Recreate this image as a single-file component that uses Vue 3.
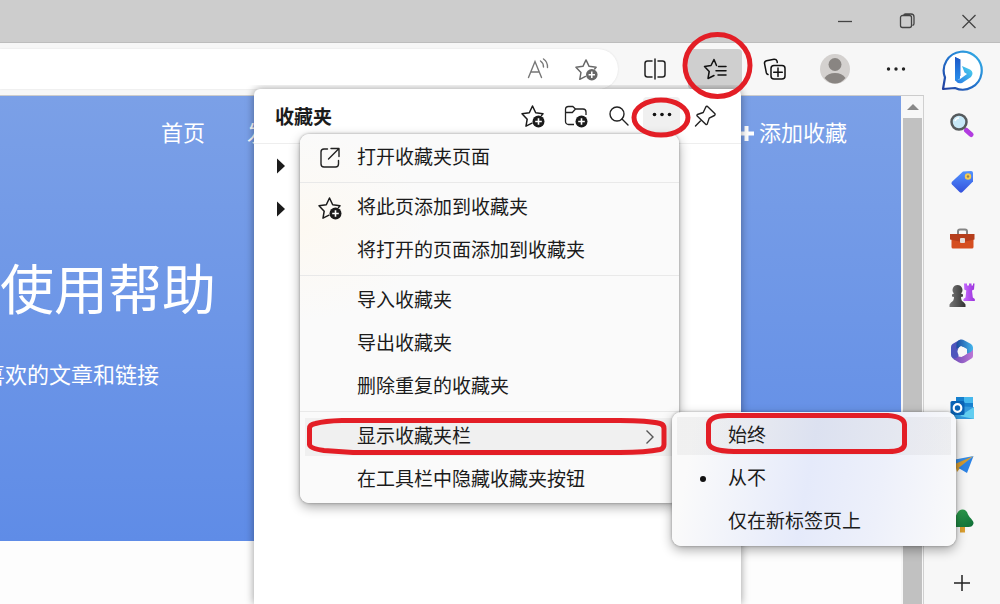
<script setup>
import { ref } from 'vue'

const address = ref('')
const windowButtons = [
  { name: '最小化', d: 'M3 10.5h14' },
  { name: '还原', d: 'M3.500 6.500a2 2 0 0 1 2-2h7a2 2 0 0 1 2 2v8a2 2 0 0 1-2 2h-7a2 2 0 0 1-2-2zM6.500 4.500q.5-1.500 2-1.500h5.500a3 3 0 0 1 3 3v6.500q0 1.500-1.500 2' },
  { name: '关闭', d: 'M3.500 4l13 13M16.500 4l-13 13' },
]
const groups = [
  [{ text: '打开收藏夹页面', icon: 'open' }],
  [{ text: '将此页添加到收藏夹', icon: 'star' }, { text: '将打开的页面添加到收藏夹' }],
  [{ text: '导入收藏夹' }, { text: '导出收藏夹' }, { text: '删除重复的收藏夹' }],
  [{ text: '显示收藏夹栏', sub: true }, { text: '在工具栏中隐藏收藏夹按钮' }],
]
const options = ['始终', '从不', '仅在新标签页上']
const current = ref('从不')
const tools = ['搜索', '购物', '工具', '游戏', 'Microsoft 365', 'Outlook', 'Drop', '电子树']
</script>

<template>
  <div class="browser">
    <svg class="defs" aria-hidden="true">
      <defs>
        <symbol id="star-add" viewBox="0 0 26 26">
          <path d="M12 20.200l-6 3 1.200-7L2 10.700l7.300-1L12.500 3l3.200 6.700 7.300 1-1.500 1.700" fill="none" stroke="currentColor" stroke-width="1.500" stroke-linejoin="round" stroke-linecap="round" />
          <circle cx="18.500" cy="18.500" r="6" fill="currentColor" />
          <path d="M18.500 15.200v6.600M15.200 18.500h6.600" stroke="#fff" stroke-width="1.600" />
        </symbol>
        <linearGradient id="bing-line" x1="0" y1="1" x2="1" y2="0"><stop stop-color="#233f9e" /><stop offset=".5" stop-color="#2376cf" /><stop offset="1" stop-color="#35b4e8" /></linearGradient>
        <linearGradient id="bing-b" x1="0" y1="0" x2="0" y2="1"><stop stop-color="#1d58c7" /><stop offset="1" stop-color="#2990ed" /></linearGradient>
        <linearGradient id="bing-c" x1="0" y1="1" x2="1" y2="0"><stop stop-color="#2577e5" /><stop offset="1" stop-color="#4ed6ed" /></linearGradient>
        <linearGradient id="tag-fill" x1="0" y1="0" x2="0" y2="1"><stop stop-color="#5293ff" /><stop offset="1" stop-color="#3451dc" /></linearGradient>
        <linearGradient id="pawn-fill"><stop stop-color="#777" /><stop offset="1" stop-color="#333" /></linearGradient>
        <linearGradient id="rook-fill"><stop stop-color="#c66aff" /><stop offset="1" stop-color="#9a32db" /></linearGradient>
        <linearGradient id="office-a"><stop stop-color="#1c4b9f" /><stop offset="1" stop-color="#45b6ed" /></linearGradient>
        <linearGradient id="office-b"><stop stop-color="#6c4bb6" /><stop offset="1" stop-color="#bc76d6" /></linearGradient>
        <linearGradient id="tree-fill" x1="0" y1="0" x2="1" y2="1"><stop stop-color="#35a852" /><stop offset="1" stop-color="#0d6b35" /></linearGradient>
      </defs>
    </svg>

    <header class="titlebar">
      <button v-for="b in windowButtons" :key="b.name" :aria-label="b.name">
        <svg width="20" height="20" viewBox="0 0 20 20"><path :d="b.d" fill="none" stroke="#444" stroke-width="1.300" /></svg>
      </button>
    </header>

    <div class="body">
      <div class="main">
        <div class="toolbar">
          <div class="address">
            <input v-model="address" type="text" aria-label="地址栏" />
            <button aria-label="大声朗读">
              <svg width="24" height="24" viewBox="0 0 24 24" fill="none" stroke="#777" stroke-width="1.400" stroke-linecap="round"><path d="M2.500 20.500L9 4.500l6.500 16M5 15h8M14.500 4q3 2 3 6M17.500 2q4.300 3 4 8.500" /></svg>
            </button>
            <button aria-label="将此页添加到收藏夹" class="muted"><svg width="25" height="25"><use href="#star-add" /></svg></button>
          </div>
          <button class="tool" aria-label="拆分屏幕">
            <svg width="24" height="24" viewBox="0 0 24 24" fill="none" stroke="#222" stroke-width="1.500" stroke-linecap="round"><path d="M9 4H4.500a2.500 2.500 0 0 0-2.500 2.500v11A2.500 2.500 0 0 0 4.500 20H9M15 4h4.500a2.500 2.500 0 0 1 2.500 2.500v11a2.500 2.500 0 0 1-2.500 2.500H15M12 2v20" /></svg>
          </button>
          <button class="tool active" aria-label="收藏夹">
            <svg width="24" height="24" viewBox="0 0 24 24" fill="none" stroke="#111" stroke-width="1.500" stroke-linejoin="round" stroke-linecap="round"><path d="M13.500 8.500L11 2.500 8 8.500l-6.500 1 4.700 5-1.200 7 6-3M15.500 9.500H23M13 13.700h10M15 18h8" /></svg>
          </button>
          <button class="tool" aria-label="集锦">
            <svg width="24" height="24" viewBox="0 0 24 24" fill="none" stroke="#111" stroke-width="1.500" stroke-linecap="round"><path d="M5 17.500q-1.300-.3-1.700-1.800L1.500 6.500Q1.300 4.300 3.500 3.700L11 2.200q2.300-.2 3 1.800l.3 1.500" /><rect x="8" y="8.500" width="14" height="13.500" rx="3" /><path d="M15 11v8.500M10.700 15.300h8.600" /></svg>
          </button>
          <button class="tool" aria-label="个人资料">
            <svg width="30" height="30" viewBox="0 0 30 30"><circle cx="15" cy="15" r="15" fill="#d4d1cf" /><circle cx="15" cy="10.500" r="6.500" fill="#898582" /><path d="M4.500 24Q8 19 15 19t10.500 5Q21 29.500 15 29.500T4.500 24" fill="#898582" /></svg>
          </button>
          <button class="tool" aria-label="设置及其他">
            <svg width="24" height="24" viewBox="0 0 24 24" fill="#222"><circle cx="4.500" cy="12" r="1.700" /><circle cx="12" cy="12" r="1.700" /><circle cx="19.500" cy="12" r="1.700" /></svg>
          </button>
        </div>

        <div class="viewport">
          <main class="page">
            <section class="hero">
              <nav>
                <a href="#">首页</a>
                <a href="#">发现</a>
                <a href="#" class="add"><svg width="15" height="15" viewBox="0 0 15 15"><path d="M7.500 0v15M0 7.500h15" stroke="#fff" stroke-width="4" /></svg>添加收藏</a>
              </nav>
              <h1>使用帮助</h1>
              <p>喜欢的文章和链接</p>
            </section>
          </main>
          <div class="scrollbar">
            <button aria-label="向上滚动"><svg width="12" height="6" viewBox="0 0 12 6"><path d="M6 0l6 6H0z" fill="#888" /></svg></button>
            <div class="thumb"></div>
          </div>
        </div>
      </div>

      <aside class="sidebar">
        <button class="bing" aria-label="必应">
          <svg width="42" height="42" viewBox="0 0 42 42">
            <path d="M2 40l2-11.500A19 19 0 1 1 14 39z" fill="#fff" stroke="url(#bing-line)" stroke-width="2.200" stroke-linejoin="round" />
            <path d="M14 8l5 2.500v19l-4 2.800-1-1z" fill="url(#bing-b)" />
            <path d="M14 8l5.500 2.500v16L15 32q-1-1-1-3z" fill="url(#bing-b)" />
            <path d="M14 29q1.500 3 5.500.8l6.500-4.800-2.500-1.500-2.500-6.500 8 3.500q4.500 3 1 7.500l-9 6q-6 1.500-7-5" fill="url(#bing-c)" />
          </svg>
        </button>
        <button v-for="(t, i) in tools" :key="t" class="app" :aria-label="t">
          <svg width="26" height="26" viewBox="0 0 26 26">
            <g v-if="i === 0"><path d="M16 16l7 6" stroke="#666" stroke-width="2" /><path d="M17.500 18.500l4.500 4" stroke="#b23ce0" stroke-width="5" stroke-linecap="round" /><circle cx="10" cy="10" r="7.500" fill="#c7e8f7" stroke="#555a5d" stroke-width="2.500" /><path d="M6 9q1-3 4-3" stroke="#fff" fill="none" stroke-width="1.500" /></g>
            <g v-else-if="i === 1"><path d="M14 2.500L22 2q2 0 2 2v8.500L13.500 23q-1.500 1.300-3 0L3 15.500q-1.300-1.300 0-2.700z" fill="url(#tag-fill)" /><circle cx="19" cy="7.500" r="3.200" fill="#f3ca52" /><circle cx="19" cy="7.500" r="1.200" fill="#98804b" /></g>
            <g v-else-if="i === 2"><path d="M9 9V6.500q0-2 2-2h5q2 0 2 2V9" fill="none" stroke="#858585" stroke-width="2" /><rect x="2.500" y="10" width="22" height="13.500" rx="1.500" fill="#d54e20" /><path d="M1 9h24.500v5.500l-9 2h-6L1 14.500z" fill="#b63e1c" /><rect x="11" y="13" width="5" height="5" rx="1" fill="#e4dedb" /></g>
            <g v-else-if="i === 3"><path d="M15 1.500h3v2h2v-2h2.500v2H24v-2h1.500l-.5 6-2 1 .8 7 2 1.500v2H14.500v-2l2-1.500.8-7-2-1z" fill="url(#rook-fill)" /><path d="M8.500 3a5 5 0 0 1 3.500 8.500l2 1v2l-2 .5q0 4 3 5.500l1.500 2V25h-16v-2.500L2 20.500Q5 19 5 15l-2-.5v-2l2-1A5 5 0 0 1 8.500 3" fill="url(#pawn-fill)" /></g>
            <g v-else-if="i === 4"><path d="M12.500 2q-1.500-.5-3 .5L3.500 6q-1.500 1-1.500 3v8q0 2 1.500 3l3 2q3 0 3-3v-8z" fill="#4f55bd" /><path d="M9.500 2.500q3-2 6 0L22 6q2 1.500 2 3.500v8q-3 1-6-2V11l-6-3-4.500 3V5z" fill="url(#office-a)" /><path d="M24 13v5q0 1.500-1.500 2.500l-6.500 4q-3 1.500-6 0L3.500 20.500q3.500.5 6-2l3 .5 6-3.500q4-1 5.500-4" fill="url(#office-b)" /><circle cx="13" cy="13.500" r="4.500" fill="#f8f8f8" /></g>
            <g v-else-if="i === 5"><path d="M7 2h17v11H7z" fill="#1680ce" /><path d="M15 2h9v6h-9z" fill="#45b8ed" /><path d="M5 11l20 1v12H5z" fill="#3399dc" /><path d="M25 12L11 21l14 3z" fill="#62cdf0" /><rect x="1.500" y="6" width="14" height="14" rx="1.500" fill="#0a63b5" /><circle cx="8.500" cy="13" r="3.800" fill="none" stroke="#fff" stroke-width="2.200" /></g>
            <g v-else-if="i === 6"><path d="M24.500 5L1 9.500l7 5z" fill="#358be5" /><path d="M24.500 5L6 13l2 8 4-5z" fill="#d49b31" /><path d="M24.500 5L18 22l-8.500-5z" fill="#2c83e5" /></g>
            <g v-else><path d="M11 17h5v7.500h-5z" fill="#dda02f" /><path d="M13.500 1.500q4 0 5.500 5 1 2 3 4 3 3.500 2.500 5-1 3.500-5 3.500h-12q-4.500-.5-5-4 0-2 3-5 1.500-2 2.500-4.500 2-4 5.500-4" fill="url(#tree-fill)" /></g>
          </svg>
        </button>
        <button class="plus" aria-label="自定义"><svg width="18" height="18" viewBox="0 0 18 18"><path d="M9 1v16M1 9h16" stroke="#222" stroke-width="1.500" /></svg></button>
      </aside>
    </div>

    <section class="panel" aria-label="收藏夹">
      <div class="panel-head">
        <h2>收藏夹</h2>
        <button aria-label="添加到收藏夹"><svg width="26" height="26"><use href="#star-add" /></svg></button>
        <button aria-label="添加文件夹">
          <svg width="26" height="26" viewBox="0 0 26 26"><path d="M11 21.500H5.500a3 3 0 0 1-3-3v-12a3 3 0 0 1 3-3h4.300l2.700 2.500h7.500a3 3 0 0 1 3 3v3M2.500 9.500h6.800L12.500 6" fill="none" stroke="#222" stroke-width="1.300" /><circle cx="18.500" cy="18.500" r="6" fill="#1b1b1b" /><path d="M18.500 15.200v6.600M15.200 18.500h6.600" stroke="#fff" stroke-width="1.600" /></svg>
        </button>
        <button aria-label="搜索收藏夹"><svg width="22" height="22" viewBox="0 0 22 22" fill="none" stroke="#222" stroke-width="1.400" stroke-linecap="round"><circle cx="9" cy="9" r="7" /><path d="M14 14l6 6" /></svg></button>
        <button class="on" aria-label="更多选项"><svg width="20" height="20" viewBox="0 0 20 20" fill="#111"><circle cx="2.500" cy="8.500" r="1.800" /><circle cx="10" cy="8.500" r="1.800" /><circle cx="17.500" cy="8.500" r="1.800" /></svg></button>
        <button aria-label="固定收藏夹"><svg width="24" height="24" viewBox="0 0 24 24" fill="none" stroke="#222" stroke-width="1.400" stroke-linejoin="round" stroke-linecap="round"><path d="M14.500 2.500l7.500 7.300q.5 1.200-.6 1.700l-5.200 2.600-2 6q-.7 1-1.500.2L4.200 12q-.7-.9.200-1.500l5.800-2 2.500-5.300q.8-1.300 1.800-.7M8.300 16L2.500 22" /></svg></button>
      </div>
      <ul class="folders">
        <li v-for="n in 2" :key="n"><button aria-label="展开文件夹"><svg width="10" height="16" viewBox="0 0 10 16"><path d="M1 0.500l8 7.500-8 7.500z" fill="#1b1b1b" /></svg></button></li>
      </ul>
    </section>

    <div class="menu" role="menu">
      <div v-for="(g, gi) in groups" :key="gi" class="group" role="group">
        <button v-for="item in g" :key="item.text" role="menuitem" :class="{ hover: item.sub }">
          <span class="icon">
            <svg v-if="item.icon === 'open'" width="22" height="22" viewBox="0 0 22 22" fill="none" stroke="#222" stroke-width="1.400" stroke-linecap="round" stroke-linejoin="round"><path d="M8.500 2H5a3 3 0 0 0-3 3v12a3 3 0 0 0 3 3h11.500a3 3 0 0 0 3-3v-3.500M12 1.500h8v8M20 1.500L9.500 12" /></svg>
            <svg v-else-if="item.icon === 'star'" width="26" height="26"><use href="#star-add" /></svg>
          </span>
          <span class="label">{{ item.text }}</span>
          <svg v-if="item.sub" width="10" height="16" viewBox="0 0 10 16"><path d="M1.500 1.500L8 8l-6.500 6.500" fill="none" stroke="#555" stroke-width="1.400" /></svg>
        </button>
      </div>
    </div>

    <div class="submenu" role="menu">
      <button v-for="(o, i) in options" :key="o" role="menuitemradio" :aria-checked="o === current" :class="{ hover: i === 0 }" @click="current = o">
        <span class="mark"><i v-if="o === current"></i></span><span class="text">{{ o }}</span>
      </button>
    </div>

    <svg class="marks" width="1000" height="604" viewBox="0 0 1000 604" fill="none" stroke="#e31e26" stroke-width="5" aria-hidden="true">
      <ellipse cx="717.500" cy="65.500" rx="32.500" ry="31" />
      <ellipse cx="661" cy="117.500" rx="27" ry="17.500" />
      <path d="M342 420.500H620q28 0 40 3 4 1 4 5v16q0 4-4 5-14 3-40 3H353l-29-2q-14-2-14.500-6v-16q0-4 6-5 9-2.500 26.500-3z" />
      <path d="M728 415.500H888q16 1 16.500 9v20q-.5 7-16.500 7H734q-25-.5-25.500-9v-18q1-9 19.500-9z" />
    </svg>
  </div>
</template>

<style>
body { margin: 0; }
</style>

<style scoped>
.browser { position: relative; display: flex; flex-direction: column; min-height: 100vh; overflow: hidden; background: #f7f7f7; color: #1b1b1b; font-family: "Liberation Sans", "Noto Sans CJK SC", sans-serif; font-size: 19px; }
.browser * { box-sizing: border-box; }
.defs { position: absolute; width: 0; height: 0; }
button { display: flex; align-items: center; justify-content: center; padding: 0; border: 0; background: none; color: inherit; font: inherit; flex: none; }
.titlebar { display: flex; justify-content: flex-end; height: 43px; background: #cdcdcd; border-bottom: 1px solid #bdbdbd; }
.titlebar button { width: 62px; }
.body { display: flex; flex: 1; }
.main { display: flex; flex-direction: column; flex: 1; min-width: 0; }
.toolbar { display: flex; align-items: center; gap: 6px; height: 52px; }
.address { display: flex; align-items: center; flex: 1; height: 40px; margin-right: 4px; padding-right: 7px; background: #fff; border-radius: 0 20px 20px 0; box-shadow: 0 0 2px #ddd; }
.address input { flex: 1; min-width: 0; height: 36px; border: 0; outline: 0; background: none; font: inherit; }
.address button { width: 49px; height: 36px; }
.muted { color: #686868; }
.tool { width: 54px; height: 40px; border-radius: 4px; }
.tool:last-child { width: 56px; }
.active { background: #cfcfcf; }
.viewport { display: flex; flex: 1; border-top: 1px solid #ccc; border-right: 1px solid #d0d0d0; }
.page { flex: 1; min-width: 0; overflow: hidden; background: #fdfdfd; }
.hero { padding-bottom: 149px; background: linear-gradient(#7ba0e7, #5f8ce7); color: #fff; }
nav { display: flex; gap: 42px; padding: 21px 54px 0 161px; font-size: 22px; line-height: 33px; }
nav a { color: inherit; text-decoration: none; }
.add { display: flex; align-items: center; gap: 5px; margin-left: auto; }
h1 { margin: 101px 0 0; font-size: 54px; line-height: 80px; font-weight: 400; }
p { margin: 28px 0 0 -17px; font-size: 22px; line-height: 33px; }
.scrollbar { display: flex; flex-direction: column; width: 22px; padding: 0 1px 0 2px; background: #f7f7f7; }
.scrollbar button { height: 22px; }
.thumb { flex: 1; background: #c1c1c1; }
.sidebar { display: flex; flex-direction: column; width: 76px; }
.bing { height: 54px; }
.app { height: 56px; }
.app:nth-child(odd) { height: 57px; }
.plus { height: 42px; margin-top: auto; }
.panel { position: absolute; top: 89px; right: 259px; bottom: 0; width: 487px; background: #fff; border-radius: 6px 6px 0 0; box-shadow: 0 0 8px #0006; clip-path: inset(-4px -12px 0 -12px); }
.panel-head { display: flex; align-items: center; gap: 6px; height: 55px; padding: 0 18px 0 21px; border-bottom: 1px solid #eee; }
.panel-head button { width: 37px; height: 38px; border-radius: 4px; }
.panel-head .on { background: #f0f0f0; }
h2 { flex: 1; margin: 0; padding-top: 3px; font-size: 19px; line-height: 28px; }
.folders { margin: 0; padding: 0 22px; list-style: none; }
.folders button { height: 43px; }
.menu, .submenu { position: absolute; border-radius: 9px; box-shadow: 0 4px 12px #0005, 0 0 3px #0005; }
.menu { top: 134px; right: 321px; width: 379px; padding: 2px 0; background: radial-gradient(ellipse at 0 25%, #fdf9f2, #fafafa 24%); }
.group + .group { margin-top: 3px; padding-top: 3px; border-top: 1px solid #e9e9e9; }
.menu button { width: 100%; height: 43px; padding: 0 24px 0 14px; text-align: left; }
.menu .hover { background: linear-gradient(#f0f0f0, #f0f0f0) center / 369px 38px no-repeat; }
.icon { display: flex; justify-content: center; width: 32px; }
.label { flex: 1; margin-left: 11px; }
.label, .text { padding-bottom: 4px; }
.submenu { top: 412px; right: 44px; width: 284px; padding: 2px 5px 3px; background: linear-gradient(100deg, #fafafa 8%, #e5eafa 48%, #edf0fa 72%, #fafafa); }
.submenu button { justify-content: flex-start; width: 100%; height: 43px; }
.submenu .hover { border-radius: 4px; background: linear-gradient(#0000000a, #0000000a) center / 100% 38px no-repeat; }
.mark { display: flex; justify-content: center; width: 51px; }
.mark i { width: 6px; height: 6px; border-radius: 50%; background: #111; }
.marks { position: absolute; top: 0; right: 0; pointer-events: none; }
</style>
